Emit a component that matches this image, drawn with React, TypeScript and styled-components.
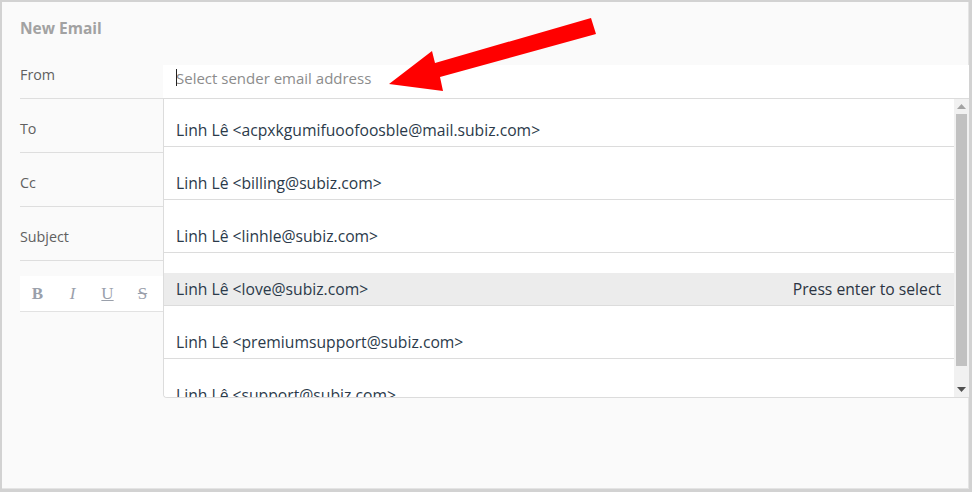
import React from "react";
import styled, { createGlobalStyle } from "styled-components";

const Global = createGlobalStyle`
  html, body { margin: 0; padding: 0; background: #ffffff; }
  * { box-sizing: border-box; }
  body { font-family: "Open Sans", "Noto Sans", sans-serif; }
`;

const Frame = styled.div`
  position: relative;
  width: 972px;
  height: 492px;
  background: #fafafa;
  border-style: solid;
  border-color: #d2d2d2;
  border-width: 2px 3px 3px 2px;
  box-shadow: inset -1px -1px 0 #e4e4e4;
  padding-left: 18px;
  display: flex;
  flex-direction: column;
  overflow: hidden;
`;

const Title = styled.div`
  height: 43px;
  padding-top: 16px;
  font-size: 15.5px;
  line-height: 20px;
  font-weight: 700;
  color: #a2a2a2;
`;

const Form = styled.div`
  display: flex;
  flex-direction: column;
`;

const FieldRow = styled.div<{ $raised?: boolean }>`
  position: relative;
  z-index: ${(p) => (p.$raised ? 2 : 1)};
  display: flex;
  align-items: flex-end;
  height: 54px;
  border-bottom: 1px solid #dedede;
`;

const Label = styled.div`
  width: 143px;
  flex: none;
  padding-bottom: 14px;
  font-size: 14.3px;
  line-height: 18px;
  color: #606060;
`;

const Value = styled.div`
  flex: 1;
  height: 33px;
`;

const FromField = styled.div`
  position: relative;
  flex: 1;
  height: 33px;
  background: #ffffff;
  display: flex;
  align-items: center;
  padding: 0 0 8px 13px;
`;

const Placeholder = styled.span`
  position: relative;
  font-size: 15px;
  line-height: 20px;
  color: #8c8c8c;
  &::before {
    content: "";
    position: absolute;
    left: 0;
    top: 1px;
    width: 1px;
    height: 17px;
    background: #222;
  }
`;

const Dropdown = styled.div`
  position: absolute;
  top: 100%;
  left: 0;
  right: 0;
  height: 300px;
  background: #ffffff;
  border: 1px solid #dcdcdc;
  border-right: none;
  border-radius: 0 0 0 4px;
  display: flex;
  overflow: hidden;
`;

const List = styled.div`
  flex: 1;
  overflow: hidden;
`;

const Item = styled.div<{ $active?: boolean }>`
  height: 33px;
  margin-top: 20px;
  &:first-child { margin-top: 15px; }
  display: flex;
  align-items: center;
  justify-content: space-between;
  padding: 0 13px 1px 12px;
  border-bottom: 1px solid #dcdcdc;
  background: ${(p) => (p.$active ? "#ececec" : "#ffffff")};
  font-size: 15.7px;
  color: #2b3a4a;
  white-space: nowrap;
`;

const Hint = styled.span`
  color: #2b3442;
  font-size: 15.7px;
`;

const Scrollbar = styled.div`
  width: 15px;
  flex: none;
  background: #f1f1f1;
  display: flex;
  flex-direction: column;
`;

const ScrollBtn = styled.div`
  height: 15px;
  display: flex;
  align-items: center;
  justify-content: center;
`;

const Track = styled.div`
  flex: 1;
  padding: 0 2px 16px 2px;
  display: flex;
  flex-direction: column;
`;

const Thumb = styled.div`
  flex: 1;
  background: #c1c1c1;
`;

const Toolbar = styled.div`
  margin-top: 15px;
  height: 36px;
  background: #ffffff;
  border-bottom: 1px solid #e2e2e2;
  display: flex;
  align-items: center;
`;

const ToolBtn = styled.span<{ $kind: "b" | "i" | "u" | "s" }>`
  width: 35px;
  text-align: center;
  font-family: "Liberation Serif", "DejaVu Serif", serif;
  font-size: 17px;
  color: #9aa0ab;
  font-weight: ${(p) => (p.$kind === "b" ? 700 : 400)};
  font-style: ${(p) => (p.$kind === "i" ? "italic" : "normal")};
  text-decoration: ${(p) =>
    p.$kind === "u" ? "underline" : p.$kind === "s" ? "line-through" : "none"};
`;

const ArrowSvg = styled.svg`
  position: absolute;
  left: 380px;
  top: 10px;
  width: 220px;
  height: 85px;
  z-index: 5;
  pointer-events: none;
`;

const senders = [
  "acpxkgumifuoofoosble@mail.subiz.com",
  "billing@subiz.com",
  "linhle@subiz.com",
  "love@subiz.com",
  "premiumsupport@subiz.com",
  "support@subiz.com",
];

export default function App() {
  return (
    <>
      <Global />
      <Frame>
        <Title>New Email</Title>
        <Form>
          <FieldRow $raised>
            <Label>From</Label>
            <FromField>
              <Placeholder>Select sender email address</Placeholder>
              <Dropdown>
                <List>
                  {senders.map((s, i) => (
                    <Item key={s} $active={i === 3}>
                      <span>{`Linh Lê <${s}>`}</span>
                      {i === 3 && <Hint>Press enter to select</Hint>}
                    </Item>
                  ))}
                </List>
                <Scrollbar>
                  <ScrollBtn>
                    <svg width="9" height="5" viewBox="0 0 9 5">
                      <polygon points="4.5,0 9,5 0,5" fill="#a3a3a3" />
                    </svg>
                  </ScrollBtn>
                  <Track>
                    <Thumb />
                  </Track>
                  <ScrollBtn>
                    <svg width="9" height="5" viewBox="0 0 9 5">
                      <polygon points="0,0 9,0 4.5,5" fill="#505050" />
                    </svg>
                  </ScrollBtn>
                </Scrollbar>
              </Dropdown>
            </FromField>
          </FieldRow>
          <FieldRow>
            <Label>To</Label>
            <Value />
          </FieldRow>
          <FieldRow>
            <Label>Cc</Label>
            <Value />
          </FieldRow>
          <FieldRow>
            <Label>Subject</Label>
            <Value />
          </FieldRow>
          <Toolbar>
            <ToolBtn $kind="b">B</ToolBtn>
            <ToolBtn $kind="i">I</ToolBtn>
            <ToolBtn $kind="u">U</ToolBtn>
            <ToolBtn $kind="s">S</ToolBtn>
          </Toolbar>
        </Form>
        <ArrowSvg viewBox="380 10 220 85">
          <polygon
            points="387,82 430,49 433,61 589,16 594,32 438,75 441,89"
            fill="#ff0000"
          />
        </ArrowSvg>
      </Frame>
    </>
  );
}
